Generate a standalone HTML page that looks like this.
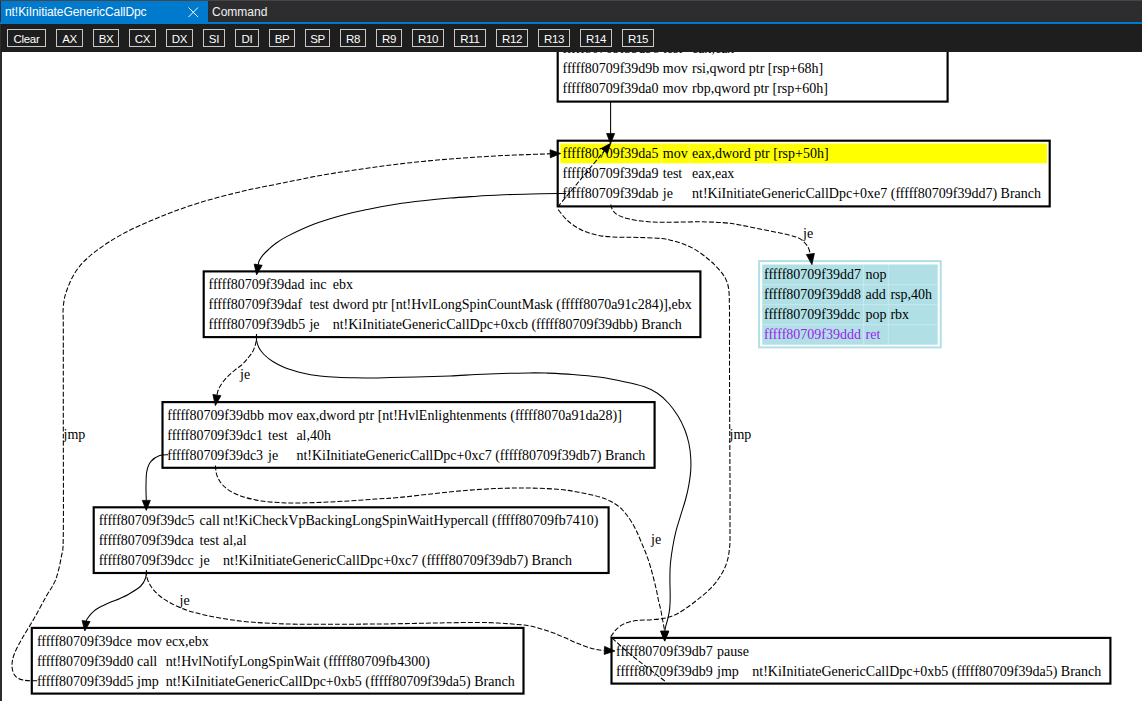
<!DOCTYPE html>
<html><head><meta charset="utf-8"><title>nt!KiInitiateGenericCallDpc</title>
<style>
html,body{margin:0;padding:0;background:#2d2d30;overflow:hidden}
body{width:1142px;height:701px;position:relative;font-family:"Liberation Sans",sans-serif}
#top{position:absolute;left:0;top:0;width:1142px;height:1px;background:#464646}
#tabs{position:absolute;left:0;top:1px;width:1142px;height:21px;background:#2d2d30}
#tab1{position:absolute;left:1px;top:0;width:207px;height:21px;background:#007acc;color:#fff;font-size:12px;line-height:21px}
#tab1 span{position:absolute;left:4px;top:1px;letter-spacing:-0.07px}
#tab2{position:absolute;left:212px;top:1px;color:#f1f1f1;font-size:12px;line-height:21px}
#line{position:absolute;left:0;top:22px;width:1142px;height:2px;background:#007acc}
#tb{position:absolute;left:1px;top:24px;width:1141px;height:28px;background:#1e1e1e}
.b{position:absolute;top:5px;height:18px;border:1px solid #c8c8c8;box-sizing:border-box;color:#fff;font-size:11.5px;letter-spacing:-0.3px;line-height:18px;text-align:center;margin-left:0}
#cv{position:absolute;left:2px;top:52px;width:1140px;height:649px;background:#fff;overflow:hidden}
svg text{font-family:"Liberation Serif",serif;font-size:14px;fill:#000}
</style></head><body>
<div id="top"></div>
<div id="tabs"><div id="tab1"><span>nt!KiInitiateGenericCallDpc</span>
<svg style="position:absolute;left:187px;top:6px" width="11" height="11" viewBox="0 0 11 11"><path d="M0.5 0.5L10 10M10 0.5L0.5 10" stroke="#fff" stroke-width="1" fill="none"/></svg></div>
<div id="tab2">Command</div></div>
<div id="line"></div>
<div id="tb"><div class="b" style="left:6px;width:39px">Clear</div><div class="b" style="left:55px;width:27px">AX</div><div class="b" style="left:92px;width:26px">BX</div><div class="b" style="left:128px;width:27px">CX</div><div class="b" style="left:165px;width:27px">DX</div><div class="b" style="left:202px;width:22px">SI</div><div class="b" style="left:234px;width:24px">DI</div><div class="b" style="left:268px;width:26px">BP</div><div class="b" style="left:304px;width:25px">SP</div><div class="b" style="left:339px;width:26px">R8</div><div class="b" style="left:375px;width:26px">R9</div><div class="b" style="left:411px;width:32px">R10</div><div class="b" style="left:453px;width:32px">R11</div><div class="b" style="left:495px;width:32px">R12</div><div class="b" style="left:537px;width:32px">R13</div><div class="b" style="left:579px;width:32px">R14</div><div class="b" style="left:621px;width:32px">R15</div></div>
<div id="cv"><svg width="1142" height="701" viewBox="0 0 1142 701" style="position:absolute;left:-2px;top:-52px">
<rect x="557.7" y="35.9" width="389.9" height="65.7" fill="#fff" stroke="#000" stroke-width="2.15"/>
<text x="562.6" y="53.0" letter-spacing="-0.025">fffff80709f39d96</text>
<text x="662.8" y="53.0">test</text>
<text x="692.0" y="53.0">eax,eax</text>
<text x="562.6" y="73.0" letter-spacing="-0.025">fffff80709f39d9b</text>
<text x="662.8" y="73.0">mov</text>
<text x="692.0" y="73.0">rsi,qword ptr [rsp+68h]</text>
<text x="562.6" y="93.0" letter-spacing="-0.025">fffff80709f39da0</text>
<text x="662.8" y="93.0">mov</text>
<text x="692.0" y="93.0">rbp,qword ptr [rsp+60h]</text>
<rect x="557.7" y="140.7" width="492.0" height="65.7" fill="#fff" stroke="#000" stroke-width="2.15"/>
<rect x="560.4" y="143.5" width="486.6" height="19.8" fill="#ff0"/>
<rect x="661.2" y="143.5" width="0.8" height="19.8" fill="#fff" opacity="0.45"/>
<rect x="689.2" y="143.5" width="0.8" height="19.8" fill="#fff" opacity="0.45"/>
<text x="562.6" y="158.0" letter-spacing="-0.025">fffff80709f39da5</text>
<text x="662.8" y="158.0">mov</text>
<text x="692.0" y="158.0">eax,dword ptr [rsp+50h]</text>
<text x="562.6" y="178.0" letter-spacing="-0.025">fffff80709f39da9</text>
<text x="662.8" y="178.0">test</text>
<text x="692.0" y="178.0">eax,eax</text>
<text x="562.6" y="198.0" letter-spacing="-0.025">fffff80709f39dab</text>
<text x="662.8" y="198.0">je</text>
<text x="692.0" y="198.0">nt!KiInitiateGenericCallDpc+0xe7 (fffff80709f39dd7) Branch</text>
<rect x="203.7" y="271.4" width="496.7" height="65.7" fill="#fff" stroke="#000" stroke-width="2.15"/>
<text x="208.6" y="289.0" letter-spacing="-0.025">fffff80709f39dad</text>
<text x="309.4" y="289.0">inc</text>
<text x="332.7" y="289.0">ebx</text>
<text x="208.6" y="309.0" letter-spacing="-0.025">fffff80709f39daf</text>
<text x="309.4" y="309.0">test</text>
<text x="332.7" y="309.0">dword ptr [nt!HvlLongSpinCountMask (fffff8070a91c284)],ebx</text>
<text x="208.6" y="329.0" letter-spacing="-0.025">fffff80709f39db5</text>
<text x="309.4" y="329.0">je</text>
<text x="332.7" y="329.0">nt!KiInitiateGenericCallDpc+0xcb (fffff80709f39dbb) Branch</text>
<rect x="162.5" y="402.1" width="492.1" height="65.7" fill="#fff" stroke="#000" stroke-width="2.15"/>
<text x="167.3" y="420.0" letter-spacing="-0.025">fffff80709f39dbb</text>
<text x="268.1" y="420.0">mov</text>
<text x="296.4" y="420.0">eax,dword ptr [nt!HvlEnlightenments (fffff8070a91da28)]</text>
<text x="167.3" y="440.0" letter-spacing="-0.025">fffff80709f39dc1</text>
<text x="268.1" y="440.0">test</text>
<text x="296.4" y="440.0">al,40h</text>
<text x="167.3" y="460.0" letter-spacing="-0.025">fffff80709f39dc3</text>
<text x="268.1" y="460.0">je</text>
<text x="296.4" y="460.0">nt!KiInitiateGenericCallDpc+0xc7 (fffff80709f39db7) Branch</text>
<rect x="93.7" y="507.3" width="514.9" height="65.7" fill="#fff" stroke="#000" stroke-width="2.15"/>
<text x="98.7" y="525.0" letter-spacing="-0.025">fffff80709f39dc5</text>
<text x="199.6" y="525.0">call</text>
<text x="223.0" y="525.0">nt!KiCheckVpBackingLongSpinWaitHypercall (fffff80709fb7410)</text>
<text x="98.7" y="545.0" letter-spacing="-0.025">fffff80709f39dca</text>
<text x="199.6" y="545.0">test</text>
<text x="223.0" y="545.0">al,al</text>
<text x="98.7" y="565.0" letter-spacing="-0.025">fffff80709f39dcc</text>
<text x="199.6" y="565.0">je</text>
<text x="223.0" y="565.0">nt!KiInitiateGenericCallDpc+0xc7 (fffff80709f39db7) Branch</text>
<rect x="31.8" y="627.9" width="491.7" height="65.7" fill="#fff" stroke="#000" stroke-width="2.15"/>
<text x="36.9" y="646.0" letter-spacing="-0.025">fffff80709f39dce</text>
<text x="137.0" y="646.0">mov</text>
<text x="165.7" y="646.0">ecx,ebx</text>
<text x="36.9" y="666.0" letter-spacing="-0.025">fffff80709f39dd0</text>
<text x="137.0" y="666.0">call</text>
<text x="165.7" y="666.0">nt!HvlNotifyLongSpinWait (fffff80709fb4300)</text>
<text x="36.9" y="686.0" letter-spacing="-0.025">fffff80709f39dd5</text>
<text x="137.0" y="686.0">jmp</text>
<text x="165.7" y="686.0">nt!KiInitiateGenericCallDpc+0xb5 (fffff80709f39da5) Branch</text>
<rect x="611.5" y="637.9" width="498.9" height="45.7" fill="#fff" stroke="#000" stroke-width="2.15"/>
<text x="616.1" y="656.0" letter-spacing="-0.025">fffff80709f39db7</text>
<text x="717.0" y="656.0">pause</text>
<text x="616.1" y="676.0" letter-spacing="-0.025">fffff80709f39db9</text>
<text x="717.0" y="676.0">jmp</text>
<text x="752.3" y="676.0">nt!KiInitiateGenericCallDpc+0xb5 (fffff80709f39da5) Branch</text>
<rect x="759.1" y="261.1" width="181.6" height="86.3" fill="#fff" stroke="#b0e0e6" stroke-width="2"/>
<rect x="762.2" y="264.5" width="175.5" height="80.2" fill="#b0e0e6"/>
<rect x="863.1" y="264.5" width="1" height="80.2" fill="#fff" opacity="0.3"/>
<rect x="887.8" y="264.5" width="1" height="80.2" fill="#fff" opacity="0.3"/>
<rect x="762.2" y="284.2" width="175.5" height="1" fill="#fff" opacity="0.3"/>
<rect x="762.2" y="304.2" width="175.5" height="1" fill="#fff" opacity="0.3"/>
<rect x="762.2" y="324.2" width="175.5" height="1" fill="#fff" opacity="0.3"/>
<text x="764.0" y="279">fffff80709f39dd7</text>
<text x="865.6" y="279">nop</text>
<text x="764.0" y="299">fffff80709f39dd8</text>
<text x="865.6" y="299">add</text>
<text x="890.4" y="299">rsp,40h</text>
<text x="764.0" y="319">fffff80709f39ddc</text>
<text x="865.6" y="319">pop</text>
<text x="890.4" y="319">rbx</text>
<text x="764.0" y="339" style="fill:#a020f0">fffff80709f39ddd</text>
<text x="865.6" y="339" style="fill:#a020f0">ret</text>
<polygon points="610.6,143.6 606.6,133.6 614.6,133.6" fill="#000" stroke="#000" stroke-width="0.8"/>
<path d="M610.6 102.0C610.6 105.0 610.6 114.7 610.6 120.0C610.6 125.3 610.6 131.3 610.6 133.6" fill="none" stroke="#000" stroke-width="1.05"/>
<polygon points="256.6,274.9 254.2,264.1 262.2,265.3" fill="#000" stroke="#000" stroke-width="0.8"/>
<path d="M566.0 193.5C564.8 193.5 564.4 193.4 558.6 193.5C552.8 193.6 540.4 193.8 531.4 194.0C522.4 194.2 513.3 194.4 504.3 194.8C495.3 195.2 486.2 195.6 477.2 196.2C468.1 196.8 459.1 197.3 450.0 198.1C440.9 198.9 431.9 199.8 422.9 200.8C413.8 201.8 404.8 202.9 395.7 204.3C386.6 205.7 377.7 207.3 368.6 209.2C359.6 211.1 350.4 213.0 341.4 215.5C332.3 218.0 323.4 220.6 314.3 224.1C305.2 227.6 293.7 233.1 287.1 236.4C280.6 239.7 278.2 241.7 275.0 244.0C271.8 246.3 270.0 248.2 268.0 250.0C266.0 251.8 264.3 253.4 262.9 255.1C261.5 256.8 260.2 258.7 259.4 260.3C258.6 261.9 258.4 264.0 258.2 264.7" fill="none" stroke="#000" stroke-width="1.05"/>
<polygon points="811.9,264.6 806.4,254.6 814.4,253.4" fill="#000" stroke="#000" stroke-width="0.8"/>
<path d="M610.7 204.5C611.1 205.5 611.5 208.6 612.8 210.4C614.1 212.2 615.6 213.9 618.4 215.3C621.2 216.8 624.9 218.1 629.6 219.1C634.3 220.1 640.3 221.1 646.4 221.6C652.5 222.1 657.1 222.3 666.0 222.3C674.9 222.3 690.6 221.8 700.0 221.8C709.4 221.9 715.8 222.1 722.5 222.6C729.2 223.1 733.8 223.9 740.0 225.0C746.2 226.1 753.3 227.7 760.0 229.0C766.7 230.3 774.0 231.7 780.0 233.0C786.0 234.3 792.2 235.7 796.0 237.0C799.8 238.3 801.0 239.3 803.0 241.0C805.0 242.7 806.8 244.8 808.0 247.0C809.2 249.2 810.0 252.8 810.4 254.0" fill="none" stroke="#000" stroke-width="1.05" stroke-dasharray="5 2"/>
<text x="803" y="238">je</text>
<polygon points="215.4,405.6 212.9,394.5 220.9,395.7" fill="#000" stroke="#000" stroke-width="0.8"/>
<path d="M256.5 334.0C256.5 334.8 256.7 336.8 256.5 338.6C256.3 340.4 256.0 342.5 255.4 344.6C254.8 346.7 254.0 349.3 252.8 351.4C251.7 353.5 250.2 355.3 248.5 357.4C246.8 359.5 244.6 362.2 242.5 364.2C240.4 366.2 238.0 367.5 235.7 369.4C233.4 371.3 231.0 373.3 228.8 375.4C226.7 377.5 224.5 379.9 222.8 382.2C221.1 384.5 219.6 387.0 218.6 389.1C217.6 391.2 217.2 394.1 216.9 395.1" fill="none" stroke="#000" stroke-width="1.05" stroke-dasharray="5 2"/>
<text x="240" y="379">je</text>
<polygon points="664.7,641.1 660.7,631.2 668.7,631.2" fill="#000" stroke="#000" stroke-width="0.8"/>
<path d="M256.5 334.0C256.5 335.1 256.2 338.2 256.6 340.5C257.0 342.8 257.6 345.2 258.8 347.5C260.0 349.8 261.7 352.2 264.0 354.5C266.3 356.8 269.3 359.3 272.8 361.5C276.3 363.7 280.1 365.8 285.0 367.7C289.9 369.6 296.7 371.5 302.5 372.9C308.3 374.3 314.1 375.2 320.0 375.9C325.9 376.6 331.8 377.0 337.6 377.3C343.4 377.6 349.2 377.7 355.0 377.8C360.8 377.9 366.8 378.0 372.6 378.0C378.4 378.0 382.7 377.8 390.0 377.6C397.3 377.4 406.4 377.2 416.4 376.9C426.4 376.6 440.0 376.3 450.0 375.9C460.0 375.5 467.6 374.9 476.3 374.5C485.1 374.1 493.8 373.8 502.5 373.5C511.2 373.2 521.5 373.0 528.8 372.9C536.1 372.8 539.0 372.8 546.3 373.1C553.6 373.4 563.8 373.8 572.6 374.5C581.4 375.2 590.1 375.9 598.9 377.1C607.6 378.3 617.6 380.3 625.1 381.9C632.6 383.5 638.3 384.7 643.7 386.6C649.1 388.5 653.2 390.5 657.4 393.3C661.6 396.1 665.4 399.7 668.8 403.5C672.2 407.3 675.3 411.7 678.0 416.1C680.7 420.5 683.0 425.2 684.8 429.8C686.6 434.4 687.9 438.9 688.9 443.5C689.9 448.1 690.4 452.6 690.7 457.2C691.0 461.8 691.0 466.3 690.7 470.9C690.4 475.5 689.7 479.9 688.9 484.6C688.1 489.3 687.1 493.8 685.7 499.0C684.3 504.2 682.2 510.3 680.6 515.7C679.0 521.1 677.2 526.2 675.9 531.4C674.6 536.6 673.6 541.8 672.7 547.0C671.8 552.2 671.0 557.5 670.5 562.8C670.0 568.1 669.9 573.5 669.9 579.0C669.9 584.5 670.2 590.7 670.2 595.6C670.2 600.5 670.1 604.7 669.7 608.6C669.3 612.5 668.5 615.8 667.8 618.8C667.1 621.8 666.2 624.4 665.7 626.5C665.2 628.6 664.9 630.4 664.7 631.2" fill="none" stroke="#000" stroke-width="1.05"/>
<polygon points="146.3,510.4 142.3,500.4 150.3,500.4" fill="#000" stroke="#000" stroke-width="0.8"/>
<path d="M168.2 454.8C166.8 454.9 162.6 454.5 159.7 455.6C156.8 456.7 153.2 458.7 151.0 461.3C148.8 463.9 147.6 467.2 146.8 471.3C146.0 475.4 146.1 480.8 146.0 485.6C145.9 490.5 146.2 497.9 146.3 500.4" fill="none" stroke="#000" stroke-width="1.05"/>
<polygon points="664.7,641.1 660.7,631.2 668.7,631.2" fill="#000" stroke="#000" stroke-width="0.8"/>
<path d="M215.4 465.5C215.6 467.0 215.7 471.4 216.6 474.3C217.5 477.2 218.8 480.2 221.0 483.0C223.2 485.8 226.0 488.6 229.8 490.9C233.6 493.2 238.6 495.3 243.8 497.0C249.1 498.7 255.5 500.0 261.3 500.9C267.1 501.8 273.0 502.2 278.8 502.6C284.6 503.0 289.0 503.1 296.3 503.0C303.6 502.9 313.8 502.7 322.6 502.3C331.4 501.9 340.1 501.4 348.9 500.9C357.6 500.4 366.6 499.7 375.1 499.1C383.6 498.5 390.6 498.3 400.0 497.4C409.4 496.5 421.0 495.0 431.5 493.9C442.0 492.8 452.5 491.6 463.0 490.7C473.5 489.8 484.1 489.1 494.6 488.6C505.1 488.2 515.6 487.9 526.1 488.0C536.6 488.1 548.9 488.6 557.6 489.3C566.4 490.0 571.6 490.9 578.6 492.2C585.6 493.5 594.5 495.5 599.7 497.0C604.9 498.5 606.7 499.3 610.0 501.0C613.3 502.7 616.5 504.6 619.4 507.0C622.3 509.4 624.7 512.2 627.3 515.7C629.9 519.2 632.8 523.8 635.1 528.3C637.5 532.8 639.3 537.4 641.4 542.4C643.5 547.4 645.9 552.9 647.7 558.1C649.5 563.3 651.0 568.6 652.4 573.8C653.8 579.0 655.3 585.1 656.3 589.5C657.3 593.9 657.7 596.8 658.4 600.0C659.1 603.2 659.8 605.5 660.5 608.6C661.2 611.7 661.8 615.7 662.4 618.8C663.0 621.9 663.6 625.3 664.0 627.4C664.4 629.5 664.6 630.6 664.7 631.2" fill="none" stroke="#000" stroke-width="1.05" stroke-dasharray="5 2"/>
<text x="651" y="544">je</text>
<polygon points="84.8,630.9 82.1,620.6 90.1,621.6" fill="#000" stroke="#000" stroke-width="0.8"/>
<path d="M146.5 570.3C146.3 571.6 146.5 575.4 145.6 578.0C144.7 580.6 143.6 583.3 140.8 586.0C138.0 588.7 132.2 592.1 128.7 594.2C125.2 596.3 122.9 597.1 120.0 598.4C117.1 599.7 114.3 600.6 111.4 601.8C108.5 603.0 105.4 604.4 102.8 605.7C100.2 607.0 97.9 608.1 95.9 609.5C93.9 610.9 92.2 612.7 90.8 614.2C89.4 615.7 88.2 617.4 87.4 618.5C86.6 619.6 86.3 620.7 86.1 621.1" fill="none" stroke="#000" stroke-width="1.05"/>
<polygon points="614.9,651.0 604.2,654.4 604.6,646.4" fill="#000" stroke="#000" stroke-width="0.8"/>
<path d="M146.5 570.3C146.5 571.2 146.1 573.5 146.5 575.5C146.9 577.5 147.6 580.0 148.8 582.5C150.1 585.0 151.7 587.8 154.0 590.4C156.3 593.0 159.3 595.8 162.8 598.3C166.3 600.8 170.6 603.2 175.0 605.3C179.4 607.4 183.8 609.2 189.0 610.9C194.2 612.6 200.1 614.0 206.5 615.4C212.9 616.8 220.6 618.2 227.6 619.3C234.6 620.4 241.3 621.2 248.6 621.9C255.9 622.6 263.1 622.9 271.3 623.3C279.5 623.7 286.2 624.1 297.6 624.2C309.1 624.4 326.3 624.2 340.0 624.2C353.7 624.2 366.7 624.1 380.0 624.0C393.3 623.9 408.3 623.5 420.0 623.3C431.7 623.1 440.0 622.9 450.0 622.7C460.0 622.6 472.9 622.4 480.0 622.4C487.1 622.4 488.2 622.6 492.3 622.8C496.4 623.0 500.4 623.1 504.5 623.4C508.6 623.7 512.7 624.0 516.8 624.4C520.9 624.8 524.9 625.0 529.0 625.8C533.1 626.5 537.2 627.7 541.3 628.9C545.4 630.1 549.5 631.5 553.6 633.0C557.7 634.5 561.7 636.3 565.8 638.1C569.9 639.9 574.0 642.0 578.1 643.6C582.2 645.2 587.0 646.9 590.3 647.9C593.6 648.9 595.6 649.4 598.0 649.8C600.4 650.2 603.3 650.3 604.4 650.4" fill="none" stroke="#000" stroke-width="1.05" stroke-dasharray="5 2"/>
<text x="179.5" y="605">je</text>
<polygon points="560.7,153.5 550.3,157.8 550.1,149.8" fill="#000" stroke="#000" stroke-width="0.8"/>
<path d="M37.2 680.7C34.9 680.6 26.8 680.9 23.1 680.1C19.4 679.3 16.9 678.0 15.0 675.7C13.2 673.5 12.2 670.1 12.0 666.6C11.8 663.1 12.4 659.2 14.1 654.5C15.8 649.8 18.8 644.5 22.1 638.5C25.5 632.5 30.2 625.3 34.2 618.3C38.2 611.2 42.7 602.6 46.3 596.2C49.9 589.8 53.1 586.2 55.6 579.7C58.1 573.2 60.0 564.5 61.3 556.9C62.6 549.3 63.0 556.8 63.3 534.0C63.6 511.2 63.3 454.1 63.3 420.0C63.3 385.9 63.3 348.5 63.3 329.6C63.3 310.7 62.7 313.5 63.3 306.8C63.9 300.1 64.7 295.9 67.0 289.7C69.3 283.5 72.5 275.9 77.0 269.7C81.5 263.5 86.4 258.6 94.0 252.6C101.6 246.7 111.6 239.9 122.6 234.0C133.5 228.1 146.9 222.2 159.7 217.0C172.5 211.8 185.8 207.0 199.6 202.7C213.4 198.4 232.3 193.8 242.4 191.3C252.5 188.8 252.6 189.0 260.0 187.5C267.4 186.0 278.1 183.9 287.1 182.1C296.2 180.3 305.2 178.3 314.3 176.6C323.4 174.9 332.3 173.4 341.4 172.0C350.4 170.6 359.6 169.3 368.6 168.0C377.7 166.7 386.6 165.5 395.7 164.4C404.8 163.3 413.8 162.3 422.9 161.4C431.9 160.5 440.9 159.7 450.0 159.0C459.1 158.3 468.1 157.7 477.2 157.1C486.2 156.5 495.3 155.9 504.3 155.5C513.3 155.1 523.8 154.7 531.4 154.4C539.0 154.1 547.1 153.9 550.2 153.8" fill="none" stroke="#000" stroke-width="1.05" stroke-dasharray="5 2"/>
<text x="63.6" y="439">jmp</text>
<path d="M664.8 681.0C659.0 676.5 638.9 661.3 629.9 653.9C620.9 646.5 614.0 639.6 610.8 636.8" fill="none" stroke="#000" stroke-width="1.05" stroke-dasharray="5 2"/>
<path d="M610.7 636.7C611.7 635.5 614.1 631.5 616.4 629.3C618.7 627.1 621.3 625.0 624.6 623.6C627.9 622.2 632.0 621.2 636.1 620.6C640.2 620.0 644.8 620.2 649.2 619.9C653.6 619.6 658.3 619.4 662.4 618.6C666.5 617.8 670.1 616.9 673.9 615.3C677.7 613.7 681.2 611.5 685.3 608.8C689.4 606.1 694.1 602.5 698.5 598.9C702.9 595.3 707.8 591.5 711.6 587.4C715.4 583.3 718.8 578.7 721.4 574.3C724.0 569.9 725.8 565.9 727.2 561.2C728.6 556.6 729.2 551.6 729.7 546.4C730.2 541.2 730.0 541.1 730.0 530.0C730.0 518.9 730.1 501.7 730.0 480.0C729.9 458.3 729.7 426.7 729.6 400.0C729.5 373.3 729.5 335.8 729.5 320.0C729.5 304.2 729.5 309.4 729.4 305.0C729.3 300.6 729.4 297.1 729.1 293.5C728.8 289.9 728.5 286.4 727.4 283.2C726.3 280.0 724.9 277.1 722.8 274.1C720.7 271.1 717.6 267.9 714.8 265.0C711.9 262.1 709.1 259.7 705.7 257.0C702.3 254.3 698.0 251.2 694.2 249.0C690.4 246.8 686.6 245.2 682.8 243.8C679.0 242.4 675.0 241.3 671.4 240.4C667.8 239.5 666.7 239.0 661.1 238.5C655.5 238.0 645.1 237.6 638.0 237.4C630.9 237.2 624.9 237.5 618.4 237.2C611.9 236.9 604.9 236.6 598.8 235.4C592.7 234.2 587.1 232.6 582.0 230.2C576.9 227.8 572.1 224.6 568.0 221.0C563.9 217.4 559.2 210.8 557.5 208.8" fill="none" stroke="#000" stroke-width="1.05" stroke-dasharray="5 2"/>
<polygon points="610.7,143.3 607.4,153.6 601.2,148.4" fill="#000" stroke="#000" stroke-width="0.8"/>
<path d="M557.7 207.0C561.4 202.5 572.2 189.5 580.0 180.2C587.8 170.9 600.2 155.9 604.3 151.0" fill="none" stroke="#000" stroke-width="1.05" stroke-dasharray="5 2"/>
<text x="729.5" y="439">jmp</text>
</svg></div>
</body></html>
